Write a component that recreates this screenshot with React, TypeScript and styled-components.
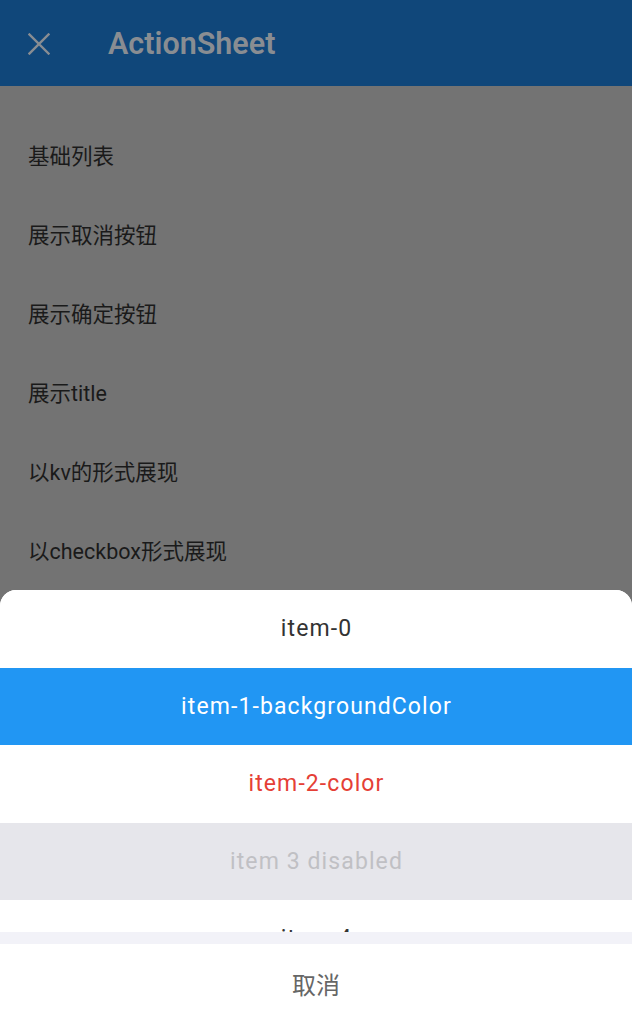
import React from "react";
import styled, { createGlobalStyle } from "styled-components";

const GlobalStyle = createGlobalStyle`
  html, body {
    margin: 0;
    padding: 0;
    height: 100%;
    background: #737373;
    font-family: Roboto, "Noto Sans CJK SC", sans-serif;
    overflow: hidden;
  }
`;

const demos = [
  "基础列表",
  "展示取消按钮",
  "展示确定按钮",
  "展示title",
  "以kv的形式展现",
  "以checkbox形式展现",
];

type SheetItem = {
  label: string;
  bg?: string;
  color?: string;
  disabled?: boolean;
};

const actions: SheetItem[] = [
  { label: "item-0" },
  { label: "item-1-backgroundColor", bg: "#2196f3", color: "#ffffff" },
  { label: "item-2-color", color: "#e53f36" },
  { label: "item 3 disabled", disabled: true },
  { label: "item-4" },
  { label: "item-5" },
];

const App: React.FC = () => {
  return (
    <Page>
      <GlobalStyle />
      <NavBar>
        <CloseButton aria-label="close">
          <svg width="22" height="22" viewBox="0 0 22 22">
            <path
              d="M1.5 1.5 L20.5 20.5 M20.5 1.5 L1.5 20.5"
              stroke="currentColor"
              strokeWidth="2.4"
              strokeLinecap="square"
            />
          </svg>
        </CloseButton>
        <NavTitle>ActionSheet</NavTitle>
      </NavBar>

      <DemoList>
        {demos.map((d) => (
          <DemoRow key={d}>{d}</DemoRow>
        ))}
      </DemoList>

      <Sheet>
        <ActionList>
          {actions.map((a) => (
            <ActionItem
              key={a.label}
              $bg={a.bg}
              $color={a.color}
              $disabled={a.disabled}
            >
              {a.label}
            </ActionItem>
          ))}
        </ActionList>
        <Gap />
        <CancelButton>取消</CancelButton>
      </Sheet>
    </Page>
  );
};

const Page = styled.div`
  position: relative;
  width: 632px;
  height: 1018px;
  background: #737373;
  overflow: hidden;
`;

const NavBar = styled.header`
  height: 86px;
  background: #10477a;
  display: flex;
  align-items: center;
  padding-left: 28px;
  box-sizing: border-box;
`;

const CloseButton = styled.button`
  width: 22px;
  height: 22px;
  padding: 0;
  border: none;
  background: none;
  color: #898d92;
  display: flex;
  margin-top: 1px;
`;

const NavTitle = styled.h1`
  margin: 0 0 0 58px;
  font-size: 30.5px;
  font-weight: 600;
  color: #898d92;
`;

const DemoList = styled.div`
  padding-top: 29px;
  display: flex;
  flex-direction: column;
`;

const DemoRow = styled.div`
  height: 79px;
  display: flex;
  align-items: center;
  padding-left: 28px;
  font-size: 21.5px;
  color: #1a1a1a;
`;

const Sheet = styled.div`
  position: absolute;
  left: 0;
  right: 0;
  bottom: 0;
  background: #ffffff;
  border-radius: 16px 16px 0 0;
  overflow: hidden;
  display: flex;
  flex-direction: column;
`;

const ActionList = styled.div`
  height: 342px;
  overflow: hidden;
`;

const ActionItem = styled.div<{
  $bg?: string;
  $color?: string;
  $disabled?: boolean;
}>`
  height: 77.5px;
  display: flex;
  align-items: center;
  justify-content: center;
  font-size: 23px;
  letter-spacing: 1.1px;
  padding-left: 1px;
  background: ${(p) => (p.$disabled ? "#e6e6eb" : p.$bg || "#ffffff")};
  color: ${(p) => (p.$disabled ? "#c0c0c4" : p.$color || "#333333")};
`;

const Gap = styled.div`
  height: 12px;
  background: #f2f2f8;
`;

const CancelButton = styled.div`
  height: 74px;
  padding-top: 4px;
  box-sizing: border-box;
  display: flex;
  align-items: center;
  justify-content: center;
  font-size: 24px;
  color: #666666;
`;

export default App;
